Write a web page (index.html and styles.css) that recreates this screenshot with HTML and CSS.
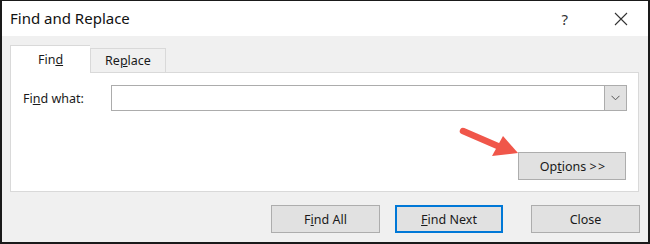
FILE: index.html
```html
<!DOCTYPE html>
<html lang="en">
<head>
  <meta charset="UTF-8">
  <meta name="viewport" content="width=device-width, initial-scale=1.0">
  <title>Find and Replace</title>
  <link rel="stylesheet" href="styles.css">
</head>
<body>
  <div class="window">
    <div class="titlebar">
      <span class="title">Find and Replace</span>
      <span class="help">?</span>
      <span class="close-x">
        <svg width="14" height="14" viewBox="0 0 14 14"><path d="M1 1 L13 13 M13 1 L1 13" stroke="#333" stroke-width="1.1" fill="none"/></svg>
      </span>
    </div>
    <div class="content">
      <div class="tabs">
        <div class="tab active">Fin<u>d</u></div>
        <div class="tab">Re<u>p</u>lace</div>
      </div>
      <div class="panel">
        <div class="row">
          <label class="label">Fi<u>n</u>d what:</label>
          <div class="combo">
            <div class="combo-input"></div>
            <div class="combo-btn">
              <svg width="9" height="6" viewBox="0 0 9 6"><path d="M0.5 0.8 L4.5 4.8 L8.5 0.8" stroke="#555" stroke-width="1" fill="none"/></svg>
            </div>
          </div>
        </div>
        <div class="options-row">
          <button class="btn options">Op<u>t</u>ions <span class="chev">&gt; &gt;</span></button>
        </div>
      </div>
      <div class="footer">
        <button class="btn">F<u>i</u>nd All</button>
        <button class="btn primary"><u>F</u>ind Next</button>
        <button class="btn close-btn">Close</button>
      </div>
    </div>
    <svg class="arrow" width="80" height="45" viewBox="0 0 80 45">
      <path d="M13 11 L50 27" stroke="#f0564a" stroke-width="6.5" stroke-linecap="round" fill="none"/>
      <polygon points="53,16 68,33 42,36" fill="#f0564a"/>
    </svg>
  </div>
</body>
</html>
```

FILE: styles.css
```css
body {
  margin: 0;
  padding: 0;
  font-family: "Noto Sans", "Open Sans", sans-serif;
  color: #1a1a1a;
}
.window {
  position: relative;
  width: 646px;
  height: 241px;
  border: 2px solid #1a1a1a;
  border-top-width: 1px;
  background-color: #f0f0f0;
  display: flex;
  flex-direction: column;
}
.titlebar {
  height: 35px;
  background-color: white;
  display: flex;
  align-items: center;
  padding-left: 8px;
}
.title {
  font-size: 15px;
  color: #111;
  flex: 1;
  margin-top: -1px;
}
.help {
  font-size: 15px;
  color: #333;
  margin-right: 46px;
}
.close-x {
  display: flex;
  margin-right: 20px;
}
.content {
  padding: 10px 9px 0 8px;
}
.tabs {
  display: flex;
  align-items: flex-end;
  height: 26px;
}
.tab {
  font-size: 12.5px;
  height: 23px;
  width: 74px;
  display: flex;
  align-items: center;
  justify-content: center;
  background-color: #f0f0f0;
  border: 1px solid #d9d9d9;
  border-bottom: none;
}
.tab.active {
  height: 27px;
  width: 79px;
  background-color: white;
  border-right: none;
  margin-bottom: -1px;
  position: relative;
  z-index: 1;
}
.panel {
  background-color: white;
  border: 1px solid #d9d9d9;
  padding: 12px 10px 0 12px;
  box-sizing: border-box;
  height: 120px;
}
.row {
  display: flex;
  align-items: center;
}
.label {
  font-size: 12.5px;
  width: 88px;
}
.combo {
  display: flex;
  width: 516px;
  height: 26px;
  border: 1px solid #acacac;
  box-sizing: border-box;
}
.combo-input {
  flex: 1;
}
.combo-btn {
  width: 21px;
  background-color: #e1e1e1;
  border-left: 1px solid #acacac;
  display: flex;
  align-items: center;
  justify-content: center;
}
.options-row {
  display: flex;
  justify-content: flex-end;
  margin-top: 41px;
  padding-right: 2px;
}
.btn {
  font-family: "Noto Sans", "Open Sans", sans-serif;
  font-size: 12.5px;
  color: #1a1a1a;
  background-color: #e1e1e1;
  border: 1px solid #adadad;
  height: 28px;
  width: 109px;
  padding: 0;
}
.options {
  width: 108px;
}
.chev {
  letter-spacing: -1px;
}
.footer {
  display: flex;
  justify-content: flex-end;
  margin-top: 13px;
  margin-right: -1px;
}
.btn.primary {
  border: 2px solid #0078d7;
  width: 108px;
  margin-left: 15px;
}
.btn.close-btn {
  margin-left: 28px;
}
.arrow {
  position: absolute;
  left: 448px;
  top: 119px;
}
```
